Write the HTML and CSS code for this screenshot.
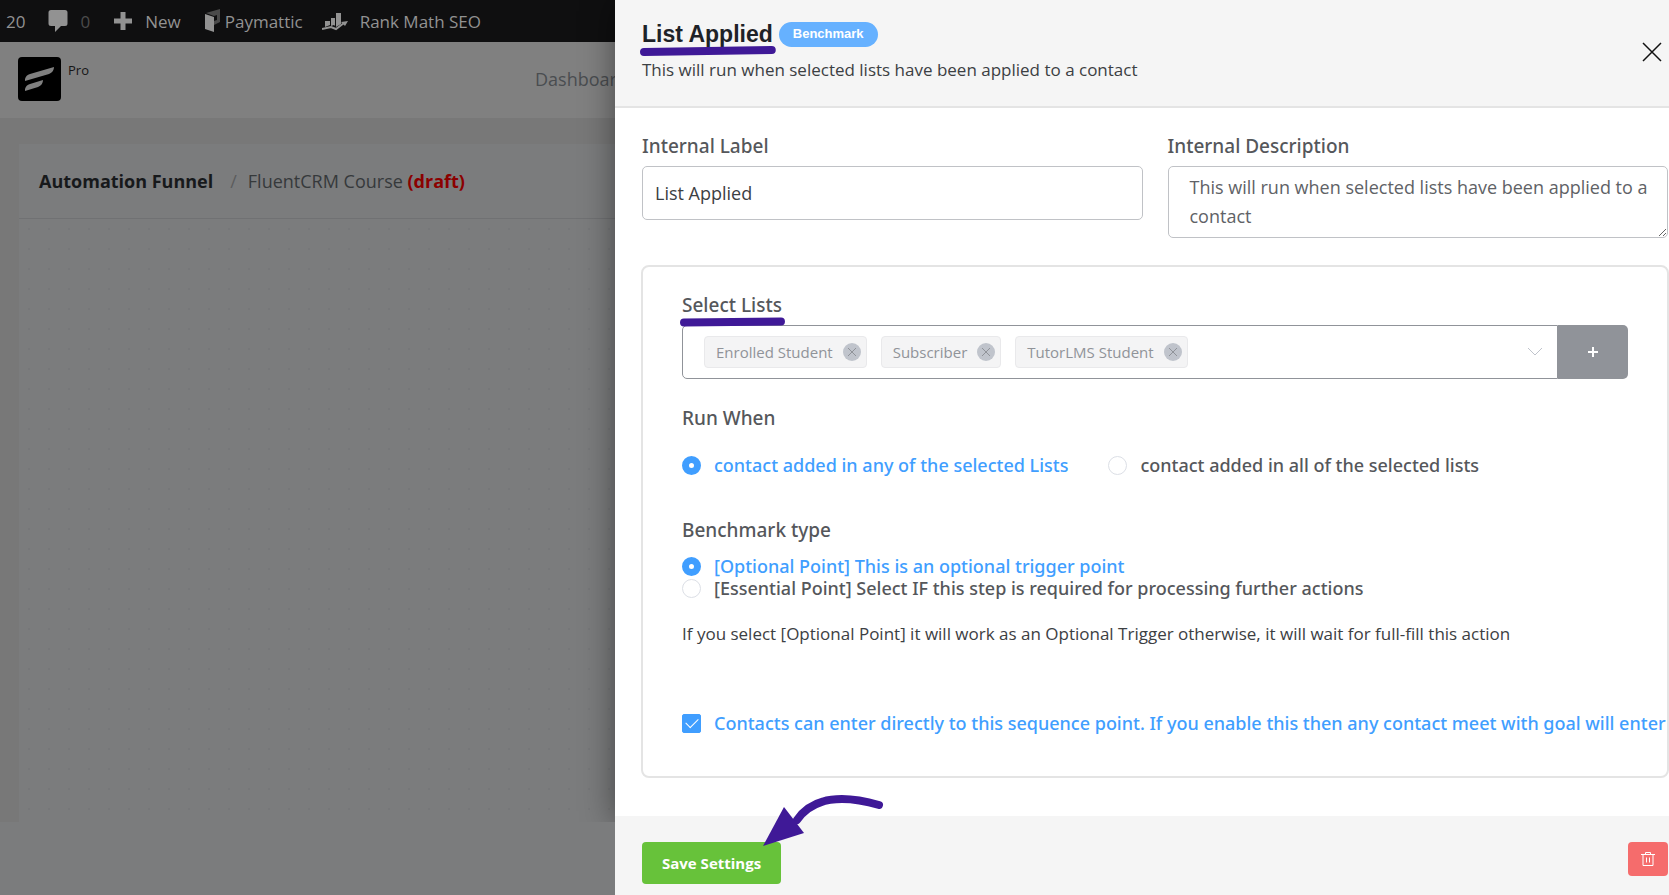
FILE: index.html
```
<!DOCTYPE html>
<html lang="en">
<head>
<meta charset="utf-8">
<title>Automation Funnel</title>
<link rel="stylesheet" href="styles.css">
</head>
<body>
<div class="page">
  <nav class="adminbar" aria-label="Toolbar">
    <a class="adminbar-item" href="#">20</a>
    <a class="adminbar-item comments" href="#">
      <svg width="20" height="24" viewBox="0 0 20 24"><path d="M3 1h14q2.500 0 2.500 2.500v11q0 2.500-2.500 2.500h-4L7 23V17H3Q.500 17 .500 14.500v-11Q.500 1 3 1z" fill="currentColor"/></svg>
      <span>0</span>
    </a>
    <a class="adminbar-item new" href="#">
      <svg width="20" height="20" viewBox="0 0 20 20"><path d="M7.500 1h5v6.500H19v5h-6.500V19h-5v-6.500H1v-5h6.500z" fill="currentColor"/></svg>
      <span>New</span>
    </a>
    <a class="adminbar-item pay" href="#">
      <svg width="17" height="24" viewBox="0 0 17 24"><path d="M2 4l14-4v13l-6 3V7z" fill="currentColor" opacity=".45"/><path d="M1 5l9 3v15l-9-3z" fill="currentColor"/><path d="M10 7l3-1v5l-3 1z" fill="#0f0f10"/></svg>
      <span>Paymattic</span>
    </a>
    <a class="adminbar-item rank" href="#">
      <svg width="26" height="20" viewBox="0 0 26 20"><path d="M3 10h5v4l-5 2zM9 7h4v8l-1-1-3 1zM14 2h5v11l-5 3z" fill="currentColor"/><path d="M0 18l9-2 5 2 8-6" fill="none" stroke="currentColor" stroke-width="2"/><path d="M19 11l7-1-3 5z" fill="currentColor"/></svg>
      <span>Rank Math SEO</span>
    </a>
  </nav>
  <header class="topbar">
    <div class="brand">
      <svg class="logo" width="43" height="44" viewBox="0 0 43 44"><rect width="43" height="44" rx="4" fill="#000"/><path d="M7 24v-2q1-4 5-5l24-7q0 5-5 7z M7 34v-2q1-4 5-5l13-4q0 5-5 7z" fill="#808080"/></svg>
      <span class="plan">Pro</span>
    </div>
    <a class="topbar-link" href="#">Dashboard</a>
  </header>
  <main class="funnel">
    <div class="card">
      <div class="crumbs">
        <strong>Automation Funnel</strong><span class="slash">/</span><span>FluentCRM Course <b class="draft">(draft)</b></span>
      </div>
      <div class="canvas"></div>
    </div>
  </main>
</div>

<section class="drawer" aria-labelledby="drawer-title">
  <header class="drawer-head">
    <div>
      <div class="title-row">
        <h1 id="drawer-title"><span class="marked">List Applied<svg class="mark" viewBox="0 0 134 12" preserveAspectRatio="none"><path d="M4 7L130 5"/></svg></span></h1>
        <span class="pill">Benchmark</span>
      </div>
      <p class="subtitle">This will run when selected lists have been applied to a contact</p>
    </div>
    <button class="close" type="button" aria-label="Close"><svg width="20" height="20" viewBox="0 0 20 20"><path d="M1 1l18 18M19 1L1 19"/></svg></button>
  </header>

  <form class="drawer-body" id="settings">
    <div class="fields">
      <div class="field">
        <label for="label">Internal Label</label>
        <input class="text-input" id="label" type="text" value="List Applied">
      </div>
      <div class="field">
        <label for="desc">Internal Description</label>
        <textarea class="text-area" id="desc" rows="2">This will run when selected lists have been applied to a contact</textarea>
      </div>
    </div>

    <div class="box">
      <h2 class="group-title"><span class="marked">Select Lists<svg class="mark" viewBox="0 0 106 12" preserveAspectRatio="none"><path d="M4 6.500L102 5.500"/></svg></span></h2>
      <div class="list-select">
        <div class="tags">
          <span class="tag">Enrolled Student <button type="button" aria-label="Remove Enrolled Student"><svg viewBox="0 0 18 18"><path d="M5 5l8 8M13 5l-8 8"/></svg></button></span>
          <span class="tag">Subscriber <button type="button" aria-label="Remove Subscriber"><svg viewBox="0 0 18 18"><path d="M5 5l8 8M13 5l-8 8"/></svg></button></span>
          <span class="tag">TutorLMS Student <button type="button" aria-label="Remove TutorLMS Student"><svg viewBox="0 0 18 18"><path d="M5 5l8 8M13 5l-8 8"/></svg></button></span>
          <svg class="chevron" width="16" height="10" viewBox="0 0 16 10"><path d="M1 1l7 7 7-7"/></svg>
        </div>
        <button class="add" type="button" aria-label="Add list"><svg width="10" height="10" viewBox="0 0 10 10"><path d="M5 0v10M0 5h10"/></svg></button>
      </div>

      <h2 class="group-title run">Run When</h2>
      <div class="inline-options">
        <label class="option"><input type="radio" name="when" checked><span>contact added in any of the selected Lists</span></label>
        <label class="option"><input type="radio" name="when"><span>contact added in all of the selected lists</span></label>
      </div>

      <h2 class="group-title type">Benchmark type</h2>
      <div class="stacked-options">
        <label class="option"><input type="radio" name="type" checked><span>[Optional Point] This is an optional trigger point</span></label>
        <label class="option"><input type="radio" name="type"><span>[Essential Point] Select IF this step is required for processing further actions</span></label>
      </div>
      <p class="note">If you select [Optional Point] it will work as an Optional Trigger otherwise, it will wait for full-fill this action</p>

      <label class="option enter"><input type="checkbox" checked><span>Contacts can enter directly to this sequence point. If you enable this then any contact meet with goal will enter</span></label>
    </div>
  </form>

  <footer class="drawer-foot">
    <button class="save" type="submit" form="settings">Save Settings</button>
    <svg class="arrow" width="124" height="54" viewBox="0 0 124 54"><path class="arrow-line" d="M116 11Q56-6 34 26"/><path class="arrow-head" d="M0 52L21 13 41 39z"/></svg>
    <button class="trash" type="button" aria-label="Delete"><svg width="16" height="16" viewBox="0 0 16 16"><path d="M1 3.500h14M5.500 3.500v-2h5v2M3 4v10.500h10V4M6.500 6.500v5M9.500 6.500v5"/></svg></button>
  </footer>
</section>
</body>
</html>
```
FILE: styles.css
```
* { box-sizing: border-box; }

body {
  margin: 0;
  height: 100vh;
  overflow: hidden;
  font-family: "Open Sans", "Noto Sans", sans-serif;
  font-size: 17px;
  color: #3c4043;
  background: #7b7c7d;
}

h1, h2, p { margin: 0; }
button { border: 0; padding: 0; font-family: inherit; cursor: pointer; }
a { color: inherit; text-decoration: none; }

/* Dimmed page */
.page { height: 100%; padding-bottom: 73px; display: flex; flex-direction: column; }

.adminbar {
  height: 42px;
  padding-left: 6px;
  display: flex;
  align-items: center;
  gap: 23px;
  background: #0f0f10;
  color: #929292;
}
.adminbar-item { display: flex; align-items: center; gap: 12px; white-space: nowrap; }
.comments span { color: #4b4b4b; }
.pay { gap: 4px; }
.rank { margin-left: -4px; }

.topbar {
  height: 76px;
  padding: 0 18px 2px;
  display: flex;
  align-items: center;
  background: #808080;
}
.brand { width: 517px; display: flex; align-items: flex-start; gap: 7px; }
.plan { padding-top: 4px; font-size: 13px; line-height: 18px; color: #161616; }
.topbar-link { font-size: 18px; color: #4a4d50; }

.funnel {
  flex: 1;
  min-height: 0;
  padding: 26px 0 0 19px;
  background: #787878;
}
.card { height: 100%; display: flex; flex-direction: column; background: #7b7c7d; }
.crumbs {
  height: 75px;
  padding: 0 20px;
  display: flex;
  align-items: center;
  border-bottom: 1px solid #707173;
  font-size: 18px;
  color: #36393b;
}
.crumbs strong { font-weight: 700; color: #17191b; }
.slash { padding: 0 11px 0 17px; color: #5b5c5e; }
.draft { color: #8b0000; }
.canvas { flex: 1; background: radial-gradient(circle, #767779 1px, transparent 1px) 0 0 / 20px 20px; }

/* Drawer */
.drawer {
  position: fixed;
  inset: 0 0 0 615px;
  display: flex;
  flex-direction: column;
  background: #fff;
}
.drawer::before {
  content: "";
  position: absolute;
  inset: 0 0 73px;
  z-index: -1;
  box-shadow: 0 0 32px rgba(0, 0, 0, .45);
  clip-path: inset(0 0 0 -48px);
}
.drawer-head {
  height: 108px;
  padding: 18px 7px 0 27px;
  display: flex;
  justify-content: space-between;
  background: #f5f5f5;
  border-bottom: 2px solid #e4e4e4;
}
.title-row { display: flex; align-items: center; gap: 6px; }
.title-row h1 {
  font: 700 23px/32px "Liberation Sans", Arial, sans-serif;
  color: #1e2227;
}
.marked { position: relative; }
.mark {
  position: absolute;
  left: -2px;
  top: 100%;
  width: calc(100% + 5px);
  height: 12px;
  margin-top: -2px;
}
.mark path { fill: none; stroke: #3f1997; stroke-width: 8; stroke-linecap: round; }
.pill {
  height: 25px;
  padding: 0 14px;
  border-radius: 13px;
  background: #66b1ff;
  color: #fff;
  font: 700 13px/23px "Liberation Sans", Arial, sans-serif;
}
.subtitle { padding-top: 8px; line-height: 24px; }
.close { align-self: flex-start; margin-top: 24px; height: 20px; background: none; }
.close path { stroke: #111; stroke-width: 1.5; }
.close svg { display: block; }

.drawer-body { flex: 1; padding: 24px 0 0 26px; overflow: hidden; }
.fields { display: grid; grid-template-columns: 1fr 1fr; gap: 25px; padding: 0 1px; }
.field label, .group-title {
  display: block;
  font-family: "Noto Sans", "Open Sans", sans-serif;
  font-size: 19px;
  line-height: 28px;
  font-weight: 500;
  color: #55575b;
}
.text-input, .text-area {
  display: block;
  width: 100%;
  margin-top: 6px;
  border: 1px solid #c0c2c6;
  border-radius: 5px;
  background: #fff;
  font: inherit;
  font-size: 18px;
}
.text-input { height: 54px; padding: 0 12px; color: #3c4043; }
.text-area { height: 72px; padding: 6px 8px 6px 21px; line-height: 29px; color: #606266; }

.box {
  margin-top: 27px;
  padding: 24px 39px 40px;
  min-height: 513px;
  border: 2px solid #e4e4e4;
  border-radius: 8px;
}
.list-select { display: flex; margin-top: 6px; height: 54px; }
.tags {
  flex: 1;
  display: flex;
  align-items: center;
  gap: 14px;
  padding: 0 14px 0 21px;
  border: 1px solid #909399;
  border-radius: 5px 0 0 5px;
}
.tag {
  height: 32px;
  padding: 0 5px 0 11px;
  display: flex;
  align-items: center;
  gap: 10px;
  border: 1px solid #e9e9eb;
  border-radius: 4px;
  background: #f4f4f5;
  color: #909399;
  font-size: 15px;
}
.tag button { width: 18px; height: 18px; border-radius: 50%; background: #c0c4cc; }
.tag svg { display: block; }
.tag path { stroke: #909399; stroke-width: 1; }
.chevron { margin-left: auto; }
.chevron path { fill: none; stroke: #c0c4cc; stroke-width: 1; }
.add { width: 70px; border-radius: 0 5px 5px 0; background: #909399; }
.add path { stroke: #fff; stroke-width: 2; }

.run { margin-top: 25px; }
.inline-options { display: flex; gap: 40px; margin-top: 22px; }
.option {
  display: flex;
  align-items: center;
  gap: 13px;
  font-family: "Noto Sans", "Open Sans", sans-serif;
  font-size: 18px;
  font-weight: 500;
  line-height: 22px;
  white-space: nowrap;
  color: #55575b;
}
.option input {
  appearance: none;
  flex: none;
  width: 19px;
  height: 19px;
  margin: 0;
  border: 1px solid #dcdfe6;
  background: #fff;
}
.option input[type="radio"] { border-radius: 50%; }
.option input[type="radio"]:checked { border: 7px solid #409eff; }
.option input:checked + span { color: #409eff; }
.type { margin-top: 40px; }
.stacked-options { margin-top: 11px; }
.note { margin-top: 22px; line-height: 26px; }
.enter { margin-top: 65px; }
.option input[type="checkbox"] {
  display: grid;
  place-items: center;
  border-color: #409eff;
  border-radius: 2px;
  background: #409eff;
}
.option input[type="checkbox"]:checked::before {
  content: "";
  width: 11px;
  height: 6px;
  border: solid #fff;
  border-width: 0 0 1px 1px;
  transform: translateY(-2px) rotate(-45deg);
}

.drawer-foot {
  position: relative;
  height: 79px;
  padding: 26px 1px 0 27px;
  display: flex;
  justify-content: space-between;
  align-items: flex-start;
  background: #f5f5f5;
}
.save {
  height: 42px;
  padding: 0 20px;
  border-radius: 4px;
  background: #67c23a;
  color: #fff;
  font-size: 15px;
  font-weight: 700;
}
.arrow { position: absolute; left: 148px; top: -22px; }
.arrow-line { fill: none; stroke: #3f1997; stroke-width: 8; stroke-linecap: round; }
.arrow-head { fill: #3f1997; }
.trash { display: grid; place-items: center; width: 40px; height: 34px; border-radius: 4px; background: #f56c6c; }
.trash path { fill: none; stroke: #fff; stroke-width: 1; }
```
